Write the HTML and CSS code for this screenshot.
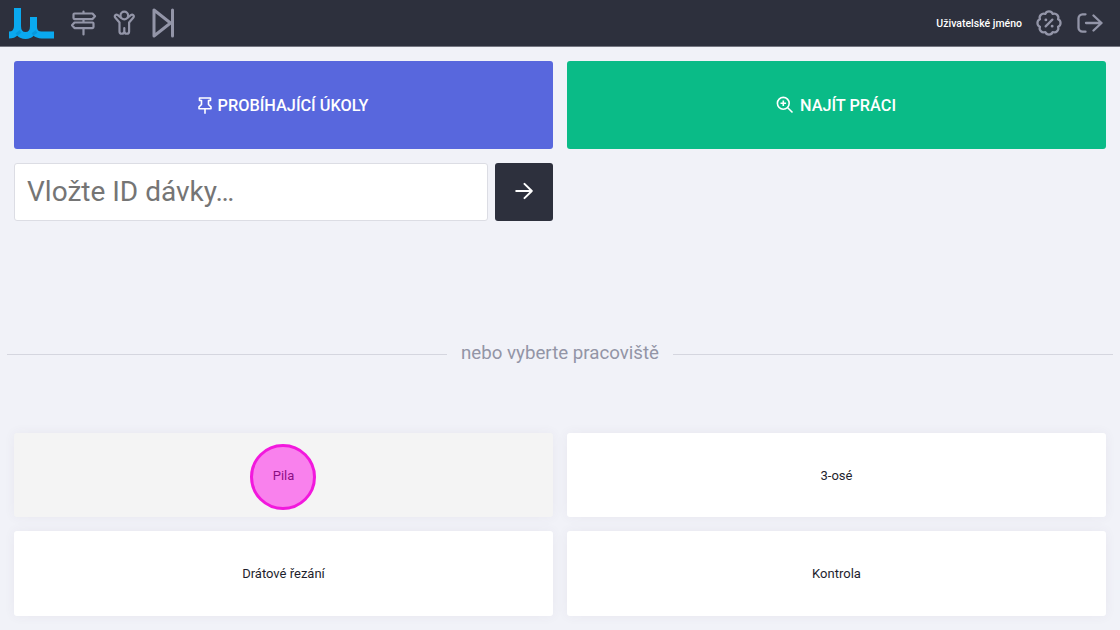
FILE: index.html
```html
<!DOCTYPE html>
<html lang="cs">
<head>
    <meta charset="UTF-8">
    <meta name="viewport" content="width=device-width, initial-scale=1.0">
    <title>Pracoviště</title>
    <link rel="stylesheet" href="styles.css">
</head>
<body>
    <header class="navbar">
        <a class="logo" href="#">
            <svg width="46" height="32" viewBox="0 0 46 32" fill="none" stroke="#0aa9ef" stroke-width="7">
                <path d="M8.500 0v18c0 5.500-3 9-8.500 9"/>
                <path d="M24.500 9v10c0 5 3 8 8 8h12.500"/>
                <path d="M8.500 15v3c0 6 3 9.500 8 9.500s8-3.500 8-9.500"/>
                <path d="M7.500 26.500l4-3M23.500 26.500l4-3" stroke="#0798dc" stroke-width="3"/>
            </svg>
        </a>
        <nav class="nav-icons">
            <!-- signpost -->
            <svg class="icon" width="26" height="26" viewBox="0 0 26 26" stroke-width="2.200">
                <path d="M12.500 1.500v2M12.500 9v3.500M12.500 18v6.500M3.500 3.500h18L24 6.300l-2.500 2.800h-18a1 1 0 0 1-1-1V4.500a1 1 0 0 1 1-1zM21.500 12.500h-18L1 15.300l2.500 2.800h18a1 1 0 0 0 1-1v-3.600a1 1 0 0 0-1-1z"/>
            </svg>
            <!-- worker -->
            <svg class="icon icon-worker" width="22" height="26" viewBox="0 0 22 26" stroke-width="2.200">
                <circle cx="11.300" cy="5.500" r="3.800"/>
                <path d="M7.600 7.500L4.800 5.200C3 3.800 1 5.600 2.200 7.500l4.300 5v9c0 3 4.300 3 4.800 0 .5 3 4.800 3 4.800 0v-9l4.300-5c1.200-1.900-.8-3.700-2.600-2.300L15 7.500M11.300 18v4"/>
            </svg>
            <!-- next -->
            <svg class="icon icon-next" width="22" height="30" viewBox="0 0 22 30" stroke-width="3">
                <path d="M2 2v26l16.500-13zM20.500 2v26"/>
            </svg>
        </nav>
        <div class="user">
            <span class="user-name">Uživatelské jméno</span>
            <svg class="icon" width="30" height="30" viewBox="0 0 24 24" stroke-width="1.800">
                <path d="M9.300 14.700l5.400-5.400M9 4.760A3.250 3.250 0 0 1 15 4.760A3.250 3.250 0 0 1 19.240 9A3.250 3.250 0 0 1 19.240 15A3.250 3.250 0 0 1 15 19.240A3.250 3.250 0 0 1 9 19.240A3.250 3.250 0 0 1 4.760 15A3.250 3.250 0 0 1 4.760 9A3.250 3.250 0 0 1 9 4.760z"/>
                <path d="M9.500 9.500v.01M14.500 14.500v.01" stroke-width="2.300"/>
            </svg>
            <svg class="icon icon-logout" width="26" height="20" viewBox="0 0 26 20" stroke-width="2.300">
                <path d="M8.500 1.300H5.500a4 4 0 0 0-4 4v9.400a4 4 0 0 0 4 4h3M9 10h15.500M16.500 2.500l8 7.500-8 7.500"/>
            </svg>
        </div>
    </header>

    <main>
        <div class="row">
            <button class="btn btn-tasks">
                <svg class="icon-pin" width="14" height="18" viewBox="0 0 14 18">
                    <path d="M1.500 1h11v2.500h-2V7.500l2.500 2.300v2H1v-2l2.500-2.300V3.500h-2zM7 12v4.800"/>
                </svg>
                PROBÍHAJÍCÍ ÚKOLY
            </button>
            <button class="btn btn-find">
                <svg width="18" height="18" viewBox="0 0 18 18">
                    <circle cx="7.300" cy="7.300" r="5.900"/>
                    <path d="M7.300 4.500v5.600M4.500 7.300h5.600M11.700 11.700l4.800 4.800"/>
                </svg>
                NAJÍT PRÁCI
            </button>
        </div>

        <form class="batch-form">
            <input type="text" class="batch-input" placeholder="Vložte ID dávky…">
            <button type="button" class="batch-submit" aria-label="Odeslat">
                <svg width="18" height="18" viewBox="0 0 18 18">
                    <path d="M1.200 9h15.600M9.500 1.900L16.800 9l-7.300 7.100"/>
                </svg>
            </button>
        </form>

        <div class="divider">nebo vyberte pracoviště</div>

        <div class="workplaces">
            <a class="card active" href="#">Pila<span class="touch"></span></a>
            <a class="card" href="#">3-osé</a>
            <a class="card" href="#">Drátové řezání</a>
            <a class="card" href="#">Kontrola</a>
        </div>
    </main>
</body>
</html>
```
FILE: styles.css
```css
* {
    box-sizing: border-box;
}

body {
    margin: 0;
    height: 100vh;
    overflow: hidden;
    background: #f1f2f8;
    color: #1e1e2d;
    font-family: Roboto, sans-serif;
    font-size: 13px;
}

.navbar {
    display: flex;
    align-items: center;
    height: 47px;
    padding: 0 17px 0 9px;
    background: #2d303d;
    border-bottom: 1px solid #747681;
}

.logo {
    display: flex;
    margin-top: 2px;
}

.nav-icons {
    display: flex;
    align-items: center;
    margin-left: 16px;
}

.icon {
    fill: none;
    stroke: #9395a8;
    stroke-linecap: round;
    stroke-linejoin: round;
}

.icon-worker {
    margin-left: 16px;
}

.icon-next {
    margin-left: 17px;
}

.user {
    display: flex;
    align-items: center;
    margin-left: auto;
}

.user-name {
    margin-right: 12px;
    color: #fff;
    font-size: 10.5px;
    font-weight: 500;
}

.icon-logout {
    margin-left: 13px;
}

main {
    padding: 14px;
}

.row {
    display: grid;
    grid-template-columns: 1fr 1fr;
    gap: 14px;
}

.btn {
    display: flex;
    align-items: center;
    justify-content: center;
    gap: 6px;
    height: 88px;
    padding: 0 1px 0 0;
    border: none;
    border-radius: 3px;
    color: #fff;
    font-family: inherit;
    font-size: 16.3px;
    font-weight: 500;
    cursor: pointer;
}

.btn svg,
.batch-submit svg {
    fill: none;
    stroke: #fff;
    stroke-width: 1.6;
    stroke-linejoin: round;
}

.btn .icon-pin {
    margin-top: 2px;
}

.btn-tasks {
    background: #5867dd;
}

.btn-find {
    background: #0abb87;
}

.batch-form {
    display: flex;
    gap: 7px;
    width: 539px;
    margin-top: 14px;
}

.batch-input {
    flex: 1;
    min-width: 0;
    height: 58px;
    padding: 0 12px 2px;
    border: 1px solid #dcdde4;
    border-radius: 3px;
    background: #fff;
    font-family: inherit;
    font-size: 28px;
}

.batch-input::placeholder {
    color: #757575;
}

.batch-submit {
    display: flex;
    align-items: center;
    justify-content: center;
    width: 58px;
    height: 58px;
    padding: 0 0 2px;
    border: none;
    border-radius: 3px;
    background: #2d303d;
}

.batch-submit svg {
    stroke-width: 2;
    stroke-linecap: round;
}

.divider {
    display: flex;
    align-items: center;
    gap: 14px;
    height: 24px;
    margin: 120px -7px 68px;
    color: #9395a6;
    font-size: 18.7px;
}

.divider::before,
.divider::after {
    content: "";
    flex: 1;
    height: 1px;
    margin-top: 2px;
    background: #d5d6df;
}

.workplaces {
    display: grid;
    grid-template-columns: 1fr 1fr;
    grid-auto-rows: 84.4px;
    gap: 13.8px 14px;
}

.card {
    position: relative;
    display: flex;
    align-items: center;
    justify-content: center;
    border-radius: 3px;
    background: #fff;
    box-shadow: 0 0 12px rgba(82, 63, 105, 0.06);
    color: #1e1e2d;
    text-decoration: none;
}

.card.active {
    background: #f4f4f4;
}

.touch {
    position: absolute;
    top: 11px;
    left: 236px;
    width: 66px;
    height: 66px;
    border: 3px solid #f218dd;
    border-radius: 50%;
    background: rgba(255, 0, 230, 0.47);
}
```
